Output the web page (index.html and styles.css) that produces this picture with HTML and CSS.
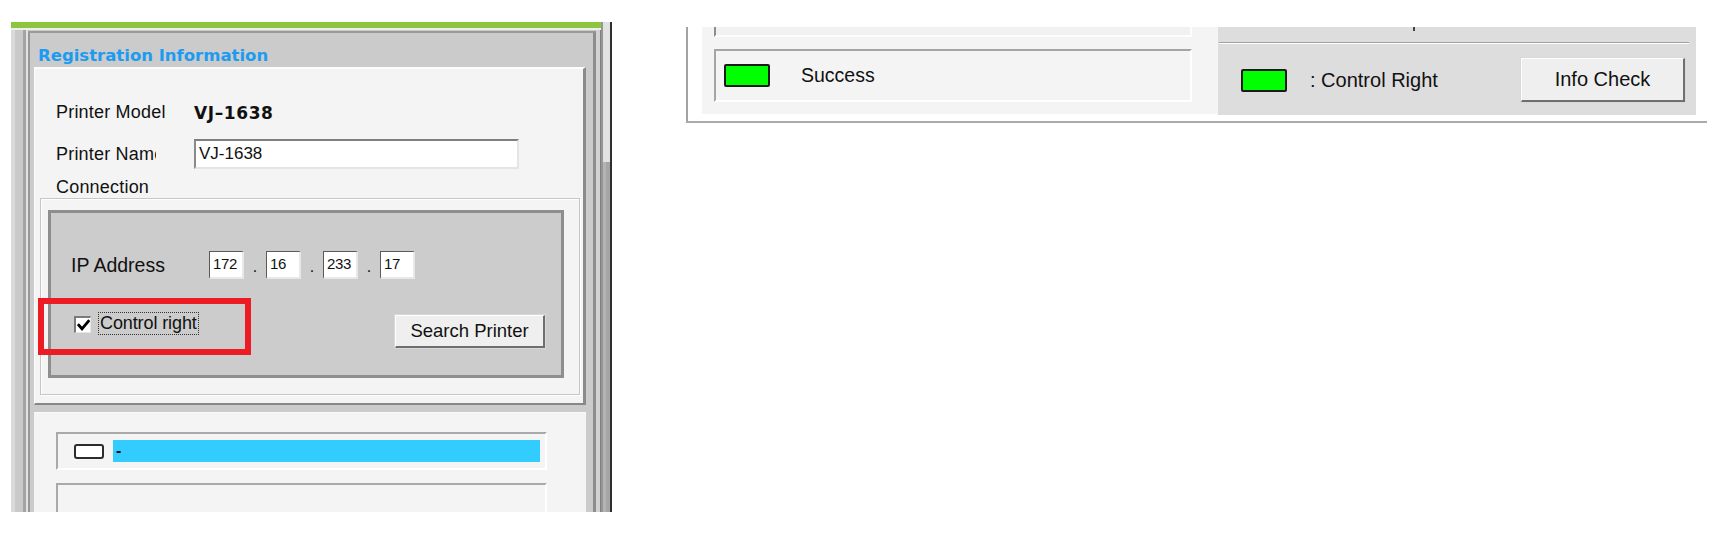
FILE: index.html
```html
<!DOCTYPE html>
<html>
<head>
<meta charset="utf-8">
<link rel="stylesheet" href="styles.css">
</head>
<body>
<div class="page">
  <div class="left-win">
    <div class="lw-main">
      <div class="green"></div>
      <div class="lw-body">
        <div class="strip"></div>
        <div class="reg">
          <div class="reg-title">Registration Information</div>
          <div class="reg-panel">
            <div class="row row-model"><span class="lbl lbl-w">Printer Model</span><span class="model">VJ–1638</span></div>
            <div class="row row-name"><span class="lbl clip">Printer Name</span><div class="input">VJ-1638</div></div>
            <div class="row row-conn"><span class="lbl">Connection</span></div>
            <div class="conn-box">
              <div class="ip-panel">
                <div class="ip-row">
                  <span class="ip-lbl">IP Address</span>
                  <span class="oct">172</span><span class="dot">.</span>
                  <span class="oct">16</span><span class="dot">.</span>
                  <span class="oct">233</span><span class="dot">.</span>
                  <span class="oct">17</span>
                </div>
                <div class="ctl-row">
                  <div class="chk">
                    <span class="box"><svg width="13" height="13" viewBox="0 0 13 13"><path d="M1.8 6.2 L5 9.8 L11.4 2.2" fill="none" stroke="#000" stroke-width="2.8" stroke-linecap="square"/></svg></span>
                    <span class="chk-text">Control right</span>
                  </div>
                  <div class="btn search">Search Printer</div>
                </div>
                <div class="highlight"></div>
              </div>
            </div>
          </div>
          <div class="lower-panel">
            <div class="status-row">
              <span class="pill"></span>
              <div class="bluebar">-</div>
            </div>
            <div class="status-row2"></div>
          </div>
        </div>
        <div class="reg-side"></div>
      </div>
    </div>
    <div class="lw-scroll"><div class="track"></div><div class="thumb"></div></div>
    <div class="lw-edge"></div>
  </div>

  <div class="right-win">
    <div class="rw-left">
      <div class="top-box"></div>
      <div class="succ-box">
        <span class="led"></span>
        <span class="succ-text">Success</span>
      </div>
    </div>
    <div class="rw-right">
      <div class="tick"></div>
      <div class="etched"></div>
      <div class="cr-row">
        <span class="led led2"></span>
        <span class="cr-text">: Control Right</span>
        <div class="btn info">Info Check</div>
      </div>
    </div>
  </div>
</div>
</body>
</html>
```

FILE: styles.css
```css
* { box-sizing: border-box; }
html, body { margin: 0; padding: 0; background: #ffffff; }
body {
  font-family: "Liberation Sans", Arial, sans-serif;
  font-size: 18px;
  color: #111111;
  width: 1725px;
  height: 533px;
  overflow: hidden;
}
.page {
  display: flex;
  align-items: flex-start;
}

/* ---------- left window ---------- */
.left-win {
  display: flex;
  margin: 22px 0 0 11px;
  height: 490px;
  overflow: hidden;
}
.lw-main {
  width: 590px;
  display: flex;
  flex-direction: column;
  min-height: 0;
}
.green { flex: none; height: 6px; background: #8cc63f; }
.lw-body {
  flex: 1;
  min-height: 0;
  overflow: hidden;
  display: flex;
  background: #c9c9c9;
  border-top: 2px solid #eeeeee;
}
.strip {
  flex: none;
  width: 17px;
  background: linear-gradient(to right,
    #dadada 0, #dadada 4px,
    #c9c9c9 4px, #c9c9c9 12px,
    #a3a3a3 12px, #a3a3a3 15px,
    #e2e2e2 15px, #e2e2e2 17px);
}
.reg {
  flex: none;
  width: 568px;
  margin-top: 1px;
  border-left: 2px solid #979797;
  border-top: 2px solid #9a9a9a;
  border-right: 3px solid #8d8d8d;
  background: #cbcbcb;
  display: flex;
  flex-direction: column;
  min-height: 0;
}
.reg-side {
  flex: none;
  width: 5px;
  background: linear-gradient(to right, #d2d2d2 0, #d2d2d2 4px, #7f7f7f 4px);
}
.reg-title {
  flex: none;
  height: 34px;
  padding: 12px 0 0 8px;
  line-height: 22px;
  font-family: "DejaVu Sans", sans-serif;
  font-weight: bold;
  font-size: 16.5px;
  color: #1b9cf2;
}
.reg-panel {
  flex: none;
  margin-left: 4px;
  width: 552px;
  height: 338px;
  background: #f4f4f4;
  border-top: 2px solid #fdfdfd;
  border-left: 1px solid #fdfdfd;
  border-right: 3px solid #8b8b8b;
  border-bottom: 2px solid #878787;
  display: flex;
  flex-direction: column;
}
.row {
  flex: none;
  display: flex;
  align-items: center;
  padding-left: 21px;
}
.lbl { white-space: nowrap; letter-spacing: 0.2px; }
.lbl-w { width: 138px; }
.row-model { margin-top: 32px; height: 22px; }
.model {
  font-family: "DejaVu Sans", sans-serif;
  font-weight: bold;
  font-size: 17px;
  letter-spacing: 0.6px;
  margin-top: 2px;
}
.row-name { margin-top: 16px; height: 30px; }
.clip { width: 100px; overflow: hidden; margin-right: 38px; }
.input {
  width: 325px;
  height: 30px;
  background: #ffffff;
  border-top: 2px solid #7f7f7f;
  border-left: 2px solid #8a8a8a;
  border-right: 2px solid #e4e4e4;
  border-bottom: 2px solid #e4e4e4;
  font-size: 17px;
  line-height: 26px;
  padding-left: 3px;
}
.row-conn { margin-top: 7px; height: 22px; }
.conn-box {
  flex: none;
  margin-left: 5px;
  width: 540px;
  height: 197px;
  border: 1px solid #c6c6c6;
  box-shadow: inset 1px 1px 0 #ffffff, 1px 1px 0 #ffffff;
}
.ip-panel {
  position: relative;
  margin: 11px 0 0 7px;
  width: 516px;
  height: 168px;
  border: 3px solid #8e8e8e;
  background: #cccccc;
}
.ip-row {
  display: flex;
  align-items: center;
  margin-top: 38px;
  height: 28px;
  padding-left: 20px;
}
.ip-lbl { width: 138px; white-space: nowrap; font-size: 19.5px; }
.oct {
  width: 35px;
  height: 28px;
  background: #ffffff;
  border-top: 1px solid #5a5a5a;
  border-left: 1px solid #5a5a5a;
  border-right: 2px solid #e8e8e8;
  border-bottom: 2px solid #e8e8e8;
  font-size: 15px;
  line-height: 24px;
  padding-left: 3px;
  letter-spacing: -0.3px;
}
.dot {
  width: 22px;
  text-align: center;
  font-size: 16px;
  line-height: 28px;
  padding-top: 4px;
}
.ctl-row {
  display: flex;
  align-items: flex-start;
  margin-top: 33px;
  height: 36px;
}
.chk {
  display: flex;
  align-items: flex-start;
  margin-left: 23px;
}
.box {
  width: 17px;
  height: 17px;
  margin-top: 4px;
  background: #ffffff;
  border-top: 2px solid #7a7a7a;
  border-left: 2px solid #7a7a7a;
  border-right: 1px solid #e6e6e6;
  border-bottom: 1px solid #e6e6e6;
  display: flex;
  align-items: center;
  justify-content: center;
}
.chk-text {
  margin-left: 7px;
  height: 23px;
  padding: 0 1px;
  border: 1px dotted #333333;
  line-height: 21px;
  white-space: nowrap;
  letter-spacing: -0.1px;
}
.btn {
  display: flex;
  align-items: center;
  justify-content: center;
  background: #efefef;
  border-top: 1px solid #ffffff;
  border-left: 1px solid #ffffff;
  border-right: 2px solid #6f6f6f;
  border-bottom: 2px solid #6f6f6f;
  box-shadow: 0 0 0 1px #d8d8d8;
  white-space: nowrap;
}
.search {
  margin: 3px 16px 0 auto;
  width: 150px;
  height: 33px;
  font-size: 18.5px;
}
.highlight {
  position: absolute;
  left: -13px;
  top: 85px;
  width: 213px;
  height: 57px;
  border: 6px solid #ed1c24;
}
.lower-panel {
  flex: 1;
  min-height: 0;
  overflow: hidden;
  margin: 7px 0 0 4px;
  width: 552px;
  background: #f4f4f4;
  border-top: 1px solid #fafafa;
  display: flex;
  flex-direction: column;
}
.status-row {
  flex: none;
  margin: 19px 0 0 22px;
  width: 491px;
  height: 38px;
  border-top: 2px solid #a9a9a9;
  border-left: 2px solid #a9a9a9;
  border-right: 2px solid #ffffff;
  border-bottom: 2px solid #ffffff;
  display: flex;
  align-items: center;
}
.pill {
  margin-left: 16px;
  width: 30px;
  height: 15px;
  background: #ffffff;
  border: 2px solid #2c2c2c;
  border-radius: 3px;
}
.bluebar {
  margin-left: 9px;
  width: 427px;
  height: 22px;
  background: #33ccff;
  font-size: 16px;
  line-height: 22px;
  padding-left: 3px;
  font-weight: bold;
}
.status-row2 {
  flex: none;
  margin: 13px 0 0 22px;
  width: 491px;
  height: 40px;
  border-top: 2px solid #a9a9a9;
  border-left: 2px solid #a9a9a9;
  border-right: 2px solid #ffffff;
}
.lw-scroll {
  flex: none;
  width: 9px;
  border-left: 2px solid #969696;
  display: flex;
  flex-direction: column;
}
.track { height: 140px; background: #e2e2e2; }
.thumb { flex: 1; background: linear-gradient(to right, #b4b4b4 0, #b4b4b4 3px, #a6a6a6 3px); }
.lw-edge { flex: none; width: 2px; background: #2e2e2e; }

/* ---------- right window ---------- */
.right-win {
  margin: 27px 0 0 74px;
  width: 1021px;
  height: 96px;
  border-left: 2px solid #a3a3a3;
  border-bottom: 2px solid #ababab;
  background: #ffffff;
  display: flex;
  align-items: flex-start;
  font-size: 19.5px;
}
.rw-left {
  margin-left: 14px;
  width: 516px;
  height: 87px;
  background: #f4f4f4;
  display: flex;
  flex-direction: column;
}
.top-box {
  flex: none;
  margin-left: 12px;
  width: 478px;
  height: 10px;
  background: #f1f1f1;
  border-left: 2px solid #8d8d8d;
  border-right: 2px solid #fdfdfd;
  border-bottom: 2px solid #fdfdfd;
}
.succ-box {
  flex: none;
  margin: 12px 0 0 12px;
  width: 478px;
  height: 53px;
  border-top: 2px solid #a5a5a5;
  border-left: 2px solid #a5a5a5;
  border-right: 2px solid #ffffff;
  border-bottom: 2px solid #ffffff;
  display: flex;
  align-items: center;
}
.led {
  margin-left: 8px;
  width: 46px;
  height: 23px;
  background: #00ff00;
  border: 2px solid #1a1a1a;
  border-radius: 2px;
}
.succ-text { margin-left: 31px; }
.rw-right {
  width: 478px;
  height: 88px;
  background: #dddddd;
  display: flex;
  flex-direction: column;
}
.tick {
  flex: none;
  margin-left: 195px;
  width: 2px;
  height: 4px;
  background: #444444;
}
.etched {
  flex: none;
  margin: 11px 0 0 1px;
  width: 470px;
  border-top: 1px solid #a0a0a0;
  border-bottom: 1px solid #ffffff;
}
.cr-row {
  flex: none;
  margin-top: 14px;
  height: 44px;
  display: flex;
  align-items: center;
}
.led2 { margin-left: 23px; }
.cr-text { margin-left: 23px; white-space: nowrap; font-size: 20px; }
.info {
  margin: 0 11px 0 auto;
  width: 164px;
  height: 44px;
  font-size: 20px;
}
```
